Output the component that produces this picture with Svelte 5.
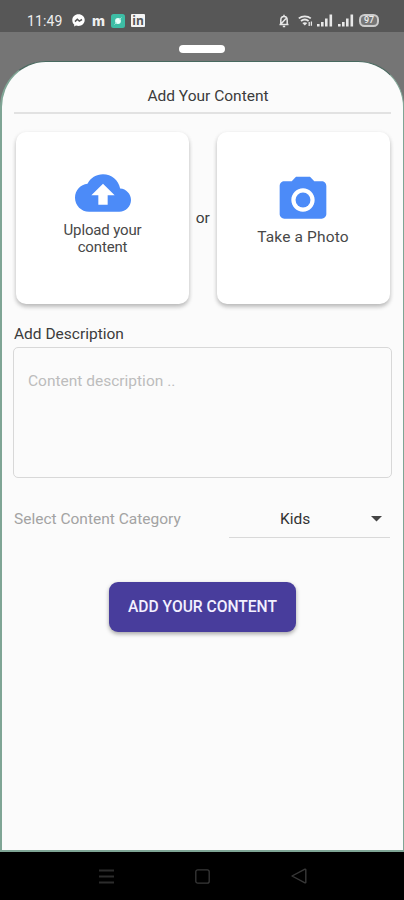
<script>
let description = "";
let category = "Kids";

const signals = [0, 1];
const bars = [
    { x: 0, h: 2.5 },
    { x: 4, h: 4.5 },
    { x: 8, h: 8 },
    { x: 12.5, h: 12 }
];

function addContent(event){
    event.preventDefault();
    console.log("content", { description, category });
}
</script>

<div class="screen">

<header class="status">
    <div class="left">
        <span class="time">11:49</span>
        <svg class="messenger" width="13" height="13" viewBox="0 0 13 13">
            <path fill="#fff" d="M6.5 .3C2.9 .3 .3 2.9 .3 6.2c0 1.8.7 3.3 1.9 4.4v2l1.8-1c.8.2 1.6.4 2.5.4 3.6 0 6.2-2.6 6.2-5.9S10.1.3 6.5.3z"/>
            <path d="M3 7.6l2.3-2.3 2 1.8 2.7-1.6" fill="none" stroke="#555" stroke-width="1.5"/>
        </svg>
        <span class="m">m</span>
        <svg class="teal" width="14" height="14" viewBox="0 0 14 14">
            <rect width="14" height="14" rx="2.5" fill="#3dbda5"/>
            <circle cx="7" cy="7" r="2.9" fill="#e6fffa"/>
            <path d="M8.5 5.5l2-2M5.5 8.5l-2 2" stroke="#a5eadb" stroke-width="1"/>
        </svg>
        <span class="in">in</span>
    </div>
    <div class="right">
        <svg class="bell" width="12" height="14" viewBox="0 0 12 14" fill="none" stroke="#e8e8e8" stroke-width="1.5">
            <path d="M1.5 10.5h9M2.8 10.2V6.2C2.8 4 4 2.6 6 2.6s3.2 1.4 3.2 3.6v4M6 .8v1.6M4.8 12.4h2.4M3.4 9.6l4.6-5"/>
        </svg>
        <svg class="wifi" width="15" height="13" viewBox="0 0 15 13" fill="none" stroke="#e8e8e8" stroke-width="1.8">
            <path d="M.8 4.4c3.4-2.7 8.6-2.7 12 0M3 7c2.2-1.7 5.4-1.7 7.6 0"/>
            <path d="M4.3 8.9q2.5-1.4 5 0L6.8 11.6z" fill="#e8e8e8" stroke="none"/>
            <path d="M11.2 8v4M13.4 7.5v4.2" stroke-width="1.3"/>
        </svg>
        {#each signals as s}
            <svg class="signal" width="16" height="13" viewBox="0 0 16 13">
                {#each bars as b}
                    <rect x={b.x} y={12.5 - b.h} width="2.6" height={b.h} fill="#e8e8e8"/>
                {/each}
            </svg>
        {/each}
        <span class="battery">97</span>
    </div>
</header>

<div class="backdrop">
    <div class="grip"></div>
</div>

<main class="sheet">
    <h1>Add Your Content</h1>

    <form on:submit={addContent}>
        <div class="cards">
            <button type="button" class="card upload">
                <svg width="56" height="56" viewBox="0 0 24 24">
                    <path fill="#4c8bf8" d="M19.35 10.04C18.67 6.59 15.64 4 12 4 9.11 4 6.6 5.64 5.35 8.04 2.34 8.36 0 10.91 0 14c0 3.31 2.69 6 6 6h13c2.76 0 5-2.24 5-5 0-2.64-2.05-4.78-4.65-4.96zM14 13v4h-4v-4H7l5-5 5 5h-3z"/>
                </svg>
                <span>Upload your<br>content</span>
            </button>
            <span class="or">or</span>
            <button type="button" class="card photo">
                <svg width="56" height="56" viewBox="0 0 24 24">
                    <circle cx="12" cy="12" r="3.2" fill="#4c8bf8"/>
                    <path fill="#4c8bf8" d="M9 2L7.17 4H4c-1.1 0-2 .9-2 2v12c0 1.1.9 2 2 2h16c1.1 0 2-.9 2-2V6c0-1.1-.9-2-2-2h-3.17L15 2H9zm3 15c-2.76 0-5-2.24-5-5s2.24-5 5-5 5 2.24 5 5-2.24 5-5 5z"/>
                </svg>
                <span>Take a Photo</span>
            </button>
        </div>

        <label for="description">Add Description</label>
        <textarea id="description" bind:value={description} placeholder="Content description .."></textarea>

        <div class="category">
            <span class="hint">Select Content Category</span>
            <div class="select">
                <span>{category}</span>
                <svg width="11" height="6" viewBox="0 0 11 6"><path d="M0 0h11L5.5 5.5z" fill="#444"/></svg>
            </div>
        </div>

        <button type="submit" class="submit">ADD YOUR CONTENT</button>
    </form>
</main>

<nav>
    <svg width="15" height="15" viewBox="0 0 15 15" stroke="#2c2c2c" stroke-width="2">
        <path d="M0 1.5h15M0 7.5h15M0 13.5h15"/>
    </svg>
    <svg width="15" height="15" viewBox="0 0 15 15" fill="none" stroke="#383838" stroke-width="1.3">
        <rect x=".8" y=".8" width="13.4" height="13.4" rx="2"/>
    </svg>
    <svg width="16" height="16" viewBox="0 0 16 16" fill="none" stroke="#383838" stroke-width="1.4" stroke-linejoin="round">
        <path d="M1 8L14 1.2q.8-.2.8.6v12.4q0 .8-.8.6z"/>
    </svg>
</nav>

</div>

<style>
:global(body){
background:#757575;
}

.screen{
display:flex;
flex-direction:column;
width:404px;
height:900px;
overflow:hidden;
background:#757575;
font-family:Roboto, sans-serif;
font-size:15.5px;
color:#3c3c3c;
}

.status{
display:flex;
justify-content:space-between;
box-sizing:border-box;
flex:none;
height:32px;
padding:9px 25px 0 27px;
background:#575757;
color:#eee;
}

.left,
.right{
display:flex;
align-items:center;
height:23px;
}

.time{
width:45px;
font-size:14px;
letter-spacing:0.1px;
}

.m{
width:12px;
margin:0 7px;
padding-bottom:1px;
font:800 14px/17px Inter, sans-serif;
text-align:center;
}

.in{
width:14px;
height:13px;
margin-left:6px;
border-radius:1px;
background:#f4f4f4;
color:#555;
font:bold 12px/13px "Open Sans", sans-serif;
text-align:center;
}

.bell{
margin-right:8px;
}

.wifi{
margin-right:4px;
}

.signal{
margin-right:5px;
}

.battery{
box-sizing:border-box;
width:20px;
height:13px;
border:2px solid #ccc;
border-radius:5.5px;
background:#777;
font-size:9px;
line-height:9px;
font-weight:500;
text-align:center;
}

.backdrop{
flex:none;
height:29px;
}

.grip{
width:46px;
height:8px;
margin:13px auto 0;
border-radius:4px;
background:#fff;
}

.sheet{
flex:1;
box-sizing:border-box;
padding:0 11px;
border:solid #7fa595;
border-width:1px 1px 2px 2px;
border-top-color:#48695f;
border-radius:46px 46px 0 0;
background:#fbfbfb;
}

h1{
box-sizing:border-box;
height:52px;
margin:0 1px;
padding:24px 0 0 11px;
border-bottom:2px solid #e2e2e2;
font-size:15.5px;
line-height:20px;
font-weight:400;
text-align:center;
}

form{
display:flex;
flex-direction:column;
}

.cards{
display:flex;
justify-content:space-between;
align-items:center;
margin:18px 2.5px 0 3px;
}

.card{
display:flex;
flex-direction:column;
align-items:center;
box-sizing:border-box;
width:173px;
height:172px;
padding:0;
border:none;
border-radius:10px;
background:#fff;
box-shadow:0 3px 4px rgba(0,0,0,0.22), 0 1px 5px rgba(0,0,0,0.07);
color:#484848;
font:400 15px/17px Roboto, sans-serif;
}

.upload{
padding-top:33px;
letter-spacing:-0.15px;
}

.photo{
padding-top:40px;
font-size:15.5px;
letter-spacing:0.15px;
}

.card span{
margin-top:1px;
}

label{
margin:21px 0 0 1px;
line-height:18px;
}

textarea{
box-sizing:border-box;
height:131px;
margin-top:4px;
padding:24px 14px;
border:1.5px solid #d8d8d8;
border-radius:5px;
background:transparent;
font:400 15.5px/19px Roboto, sans-serif;
resize:none;
outline:none;
}

textarea::placeholder{
color:#bdbdbd;
}

.category{
display:flex;
justify-content:space-between;
margin:23px 2px 0 1px;
line-height:36px;
}

.hint{
color:#a3a3a3;
}

.select{
display:flex;
align-items:center;
justify-content:space-between;
box-sizing:border-box;
width:161px;
height:37px;
padding:0 8px 0 51px;
border-bottom:1px solid #d9d9d9;
color:#333;
}

.submit{
align-self:center;
width:187px;
height:50px;
margin:44px 0 0;
padding:0;
border:none;
border-radius:9px;
background:#483d9c;
box-shadow:0 2px 4px rgba(0,0,0,0.35);
color:#f3f0ff;
font:500 15.6px/50px Roboto, sans-serif;
}

nav{
display:flex;
justify-content:space-between;
align-items:center;
box-sizing:border-box;
flex:none;
height:48px;
padding:0 97px 0 99px;
background:#000;
}
</style>
